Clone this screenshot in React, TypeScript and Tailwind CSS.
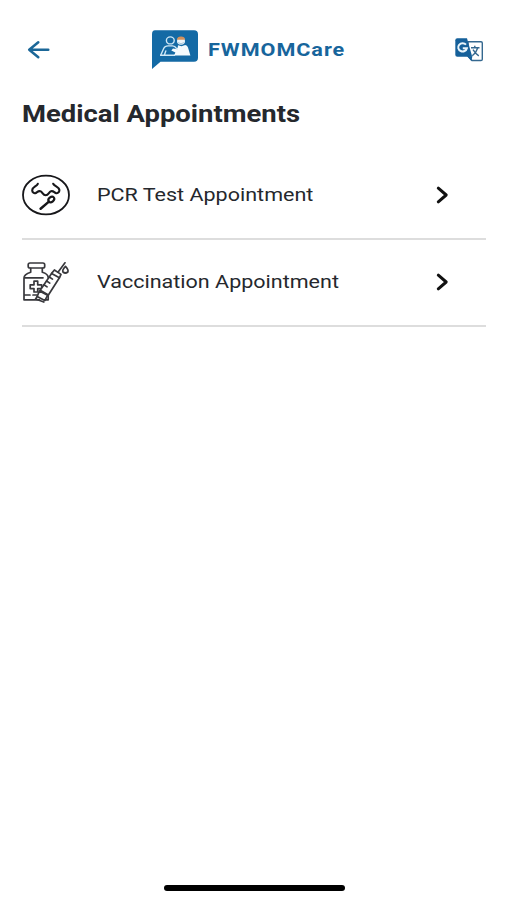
import React from "react";

interface Appointment {
  label: string;
  icon: React.ReactNode;
}

const BackArrow = () => (
  <svg className="w-6 h-5" viewBox="0 0 24 20" fill="none" stroke="#1b6798" strokeWidth="2.5" strokeLinecap="round" strokeLinejoin="round">
    <path d="M21.3 9.7H2.5M11.3 2.2L2.2 9.7L11.3 17.2" />
  </svg>
);

const Logo = () => (
  <svg className="w-12 h-10 shrink-0" viewBox="0 0 48 40">
    <path d="M4 .3H43Q47 .3 47 4.3V27.8Q47 31.8 43 31.8H9.5L1 39V4.3Q1 .3 4 .3Z" fill="#146aa5" />
    <g fill="none" stroke="#cfe8f6" strokeWidth="1.4" strokeLinejoin="round" strokeLinecap="round">
      <ellipse cx="19.3" cy="10.4" rx="3.9" ry="3.5" />
      <path d="M9.7 25.3L12.8 18.3Q14 15.9 17 15.9H21.5Q24 16 25.2 18.2L28 19" />
      <path d="M9.7 25.3H23.5M14.8 21L13.4 25" />
    </g>
    <path d="M27 15.2L30.5 16.2L34.2 15Q36.3 15.3 37 17.5L39.4 25.5H23L24.4 22.4L20.3 20.6L22 18.6L26.5 19.2Z" fill="#f4fbfe" />
    <ellipse cx="30" cy="11" rx="4" ry="3.8" fill="#eef6fa" />
    <path d="M26 9.8Q26.2 6.6 30 6.6T34 9.8Z" fill="#d3905b" />
    <path d="M27 12.6Q30 14.8 33 12.6" fill="none" stroke="#8db8d2" strokeWidth=".7" />
  </svg>
);

const TranslateIcon = () => (
  <svg className="w-7 h-6" viewBox="0 0 28 24">
    <path d="M13 3.8H26Q27.3 3.8 27.3 5.1V21.2Q27.3 22.5 26 22.5H17L13 18Z" fill="#fff" stroke="#35688f" strokeWidth="1.4" />
    <path d="M2.3 .3H12L17.2 18.8H2.3Q.3 18.8 .3 16.8V2.3Q.3 .3 2.3 .3Z" fill="#15609a" />
    <path d="M12 18.3H17.4L16.4 22.9Z" fill="#15609a" />
    <path d="M11 6.7A4.4 4.1 0 1 0 11.9 10.2H7.8" fill="none" stroke="#e8f4fb" strokeWidth="2" />
    <path d="M16 9.7H24.5M19.8 7.8V9.7M22.8 9.7Q21.3 14.7 17.3 17.7M18 11.7Q20.5 15.7 23.8 17.9" fill="none" stroke="#35688f" strokeWidth="1.4" />
  </svg>
);

const NoseSwabIcon = () => (
  <svg className="w-12 h-[42px]" viewBox="0 0 48 42" fill="none" stroke="#17171a" strokeWidth="2.1" strokeLinecap="round" strokeLinejoin="round">
    <ellipse cx="24" cy="21" rx="23" ry="19.4" strokeWidth="1.8" />
    <path d="M15.8 9.8C14.8 12.4 10.2 13 10.2 16.2C10.2 18.6 12.2 19.6 13.8 19C15.4 18 16.8 16.4 18.8 17.4C20.6 18.4 21 21.2 23.7 21.2C26.4 21.2 26.8 18.4 28.6 17.4C30.6 16.4 32 18 33.6 19C35.2 19.6 37.4 18.6 37.4 16.2C37.4 13 32.4 12.4 31.2 9.8" />
    <path d="M18.6 34.8L26.9 27.6" strokeWidth="2.5" />
    <ellipse cx="29.3" cy="25.5" rx="3.2" ry="2.4" transform="rotate(-40 29.3 25.5)" />
  </svg>
);

const VaccineIcon = () => (
  <svg className="w-12 h-[42px]" viewBox="0 0 48 42" fill="none" stroke="#38383c" strokeWidth="1.7" strokeLinecap="round" strokeLinejoin="round">
    <rect x="6.2" y="2" width="16.5" height="5" rx="1.8" />
    <path d="M8.7 7.3V11.2Q2 13.2 2 17V38.8H17.5M20.3 7.3V11.2Q26 12.8 26.2 16.5M2 16.8H21M2 34H8M11 34H15M23 38.8H26.2V34" />
    <path d="M12 20.2H15.7V23.8H19.7V27.6H15.7V31H12V27.6H8.2V23.8H12Z" />
    <path d="M32.4 9L39 13.4L37.4 16.8L26.4 34L18.2 29.2L29.6 12.4Z" fill="#fff" />
    <path d="M29.6 12.4L37.4 16.8M27.3 16L30.5 18.1M24.6 20L27.8 22.1M21.9 23.8L25.1 25.9M36 11.2L43 1.8" />
    <path d="M17.4 29.9L25.6 34.3L22.8 39.6L15.2 35.5Z" fill="#fff" />
    <path d="M15.2 35.5L13.6 38L21.8 41" />
    <path d="M43.5 5.3Q39.9 9 41 11Q43.3 13 45.8 11Q46.9 9 43.5 5.3Z" />
  </svg>
);

const Chevron = () => (
  <svg className="w-4 h-5" viewBox="0 0 16 20" fill="none" stroke="#111" strokeWidth="3" strokeLinecap="round" strokeLinejoin="round">
    <path d="M4.3 3.2L12.2 10L4.3 16.8" />
  </svg>
);

const appointments: Appointment[] = [
  { label: "PCR Test Appointment", icon: <NoseSwabIcon /> },
  { label: "Vaccination Appointment", icon: <VaccineIcon /> },
];

const App: React.FC = () => {
  return (
    <div className="w-full h-[900px] bg-white flex flex-col overflow-hidden font-['Roboto',sans-serif] text-[#25282d]">
      <header className="h-[100px] pl-[27px] pr-6 flex items-center">
        <button aria-label="Back">
          <BackArrow />
        </button>
        <div className="ml-[100px] flex items-center gap-[9px]">
          <Logo />
          <span className="w-[118px] text-lg font-bold text-[#17659c] tracking-[0.8px] whitespace-nowrap origin-left scale-x-[1.2]">
            FWMOMCare
          </span>
        </div>
        <button className="ml-auto" aria-label="Language">
          <TranslateIcon />
        </button>
      </header>

      <main className="flex-1 pt-px pl-[22px] pr-[21px]">
        <h1 className="w-fit h-[51px] text-[23px] leading-7 font-bold whitespace-nowrap origin-left scale-x-[1.192]">
          Medical Appointments
        </h1>
        <ul>
          {appointments.map((item) => (
            <li key={item.label} className="h-[87.5px] border-b-2 border-[#dddddd] flex items-center pr-9">
              {item.icon}
              <span className="ml-[27px] text-[19px] whitespace-nowrap origin-left scale-x-[1.133]">
                {item.label}
              </span>
              <span className="ml-auto">
                <Chevron />
              </span>
            </li>
          ))}
        </ul>
      </main>

      <footer className="flex justify-center pl-px pb-[9px]">
        <div className="w-[181px] h-1.5 rounded-full bg-black" />
      </footer>
    </div>
  );
};

export default App;
